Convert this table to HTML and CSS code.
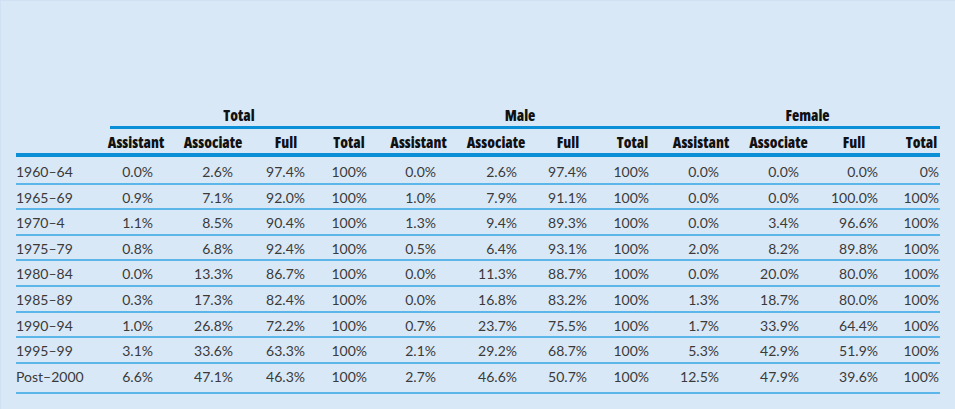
FILE: index.html
```html
<!DOCTYPE html>
<html lang="en">
<head>
<meta charset="utf-8">
<title>Rank distribution by cohort</title>
<link rel="stylesheet" href="styles.css">
</head>
<body>
<div class="page">
  <div class="table">
    <div class="grid groups">
      <div class="group g-total">Total</div>
      <div class="group g-male">Male</div>
      <div class="group g-female">Female</div>
    </div>
    <div class="grid subheads">
      <div class="lab"></div>
      <div class="sh">Assistant</div><div class="sh">Associate</div><div class="sh">Full</div><div class="sh">Total</div>
      <div class="sh">Assistant</div><div class="sh">Associate</div><div class="sh">Full</div><div class="sh">Total</div>
      <div class="sh">Assistant</div><div class="sh">Associate</div><div class="sh">Full</div><div class="sh sh-last">Total</div>
    </div>
    <div class="rows">
      <div class="grid row"><div class="lab">1960–64</div><div class="v c1">0.0%</div><div class="v c2">2.6%</div><div class="v c3">97.4%</div><div class="v c4">100%</div><div class="v c5">0.0%</div><div class="v c6">2.6%</div><div class="v c7">97.4%</div><div class="v c8">100%</div><div class="v c9">0.0%</div><div class="v c10">0.0%</div><div class="v c11">0.0%</div><div class="v c12">0%</div></div>
      <div class="grid row"><div class="lab">1965–69</div><div class="v c1">0.9%</div><div class="v c2">7.1%</div><div class="v c3">92.0%</div><div class="v c4">100%</div><div class="v c5">1.0%</div><div class="v c6">7.9%</div><div class="v c7">91.1%</div><div class="v c8">100%</div><div class="v c9">0.0%</div><div class="v c10">0.0%</div><div class="v c11">100.0%</div><div class="v c12">100%</div></div>
      <div class="grid row"><div class="lab">1970–4</div><div class="v c1">1.1%</div><div class="v c2">8.5%</div><div class="v c3">90.4%</div><div class="v c4">100%</div><div class="v c5">1.3%</div><div class="v c6">9.4%</div><div class="v c7">89.3%</div><div class="v c8">100%</div><div class="v c9">0.0%</div><div class="v c10">3.4%</div><div class="v c11">96.6%</div><div class="v c12">100%</div></div>
      <div class="grid row"><div class="lab">1975–79</div><div class="v c1">0.8%</div><div class="v c2">6.8%</div><div class="v c3">92.4%</div><div class="v c4">100%</div><div class="v c5">0.5%</div><div class="v c6">6.4%</div><div class="v c7">93.1%</div><div class="v c8">100%</div><div class="v c9">2.0%</div><div class="v c10">8.2%</div><div class="v c11">89.8%</div><div class="v c12">100%</div></div>
      <div class="grid row"><div class="lab">1980–84</div><div class="v c1">0.0%</div><div class="v c2">13.3%</div><div class="v c3">86.7%</div><div class="v c4">100%</div><div class="v c5">0.0%</div><div class="v c6">11.3%</div><div class="v c7">88.7%</div><div class="v c8">100%</div><div class="v c9">0.0%</div><div class="v c10">20.0%</div><div class="v c11">80.0%</div><div class="v c12">100%</div></div>
      <div class="grid row"><div class="lab">1985–89</div><div class="v c1">0.3%</div><div class="v c2">17.3%</div><div class="v c3">82.4%</div><div class="v c4">100%</div><div class="v c5">0.0%</div><div class="v c6">16.8%</div><div class="v c7">83.2%</div><div class="v c8">100%</div><div class="v c9">1.3%</div><div class="v c10">18.7%</div><div class="v c11">80.0%</div><div class="v c12">100%</div></div>
      <div class="grid row"><div class="lab">1990–94</div><div class="v c1">1.0%</div><div class="v c2">26.8%</div><div class="v c3">72.2%</div><div class="v c4">100%</div><div class="v c5">0.7%</div><div class="v c6">23.7%</div><div class="v c7">75.5%</div><div class="v c8">100%</div><div class="v c9">1.7%</div><div class="v c10">33.9%</div><div class="v c11">64.4%</div><div class="v c12">100%</div></div>
      <div class="grid row"><div class="lab">1995–99</div><div class="v c1">3.1%</div><div class="v c2">33.6%</div><div class="v c3">63.3%</div><div class="v c4">100%</div><div class="v c5">2.1%</div><div class="v c6">29.2%</div><div class="v c7">68.7%</div><div class="v c8">100%</div><div class="v c9">5.3%</div><div class="v c10">42.9%</div><div class="v c11">51.9%</div><div class="v c12">100%</div></div>
      <div class="grid row row-last"><div class="lab">Post–2000</div><div class="v c1">6.6%</div><div class="v c2">47.1%</div><div class="v c3">46.3%</div><div class="v c4">100%</div><div class="v c5">2.7%</div><div class="v c6">46.6%</div><div class="v c7">50.7%</div><div class="v c8">100%</div><div class="v c9">12.5%</div><div class="v c10">47.9%</div><div class="v c11">39.6%</div><div class="v c12">100%</div></div>
    </div>
  </div>
</div>
</body>
</html>
```

FILE: styles.css
```css
html, body {
  margin: 0;
  padding: 0;
  background: #d9e8f7;
}
.page {
  width: 955px;
  height: 409px;
  box-sizing: border-box;
  padding: 103px 15px 0 15px;
  background: #d9e8f7;
  border-top: 1px solid #d0e1f3;
  border-left: 1px solid #d0e1f3;
}
.table {
  width: 924px;
}
.grid {
  display: grid;
  grid-template-columns: 81px 78px 76px 70px 56px 83px 72px 72px 57px 80px 75px 76px 48px;
}
.group, .sh {
  font-family: "Open Sans", "DejaVu Sans Condensed", sans-serif;
  font-stretch: 75%;
  font-weight: 800;
  font-size: 15px;
  line-height: 22px;
  color: #111111;
  text-align: center;
}
.group {
  border-bottom: 3px solid #0b8fd6;
}
.g-total {
  grid-column: 2 / 6;
  margin-left: 13px;
  padding-right: 9px;
}
.g-male {
  grid-column: 6 / 10;
  padding-left: 2px;
}
.g-female {
  grid-column: 10 / 14;
  padding-left: 14px;
}
.subheads {
  border-bottom: 4px solid #0b8fd6;
  padding-top: 2px;
}
.sh-last {
  padding-left: 11px;
}
.rows {
  padding-top: 2px;
}
.row {
  padding-top: 2px;
  border-bottom: 2px solid #5db6ea;
  font-family: Lato, "Liberation Sans", sans-serif;
  font-size: 14px;
  line-height: 21.6px;
  color: #3a3a3a;
}
.row-last {
  padding-bottom: 5px;
}
.lab {
  text-align: left;
}
.v {
  text-align: right;
}
.c1 { padding-right: 22px; }
.c2 { padding-right: 18px; }
.c3 { padding-right: 16px; }
.c4 { padding-right: 10px; }
.c5 { padding-right: 24px; }
.c6 { padding-right: 15px; }
.c7 { padding-right: 17px; }
.c8 { padding-right: 12px; }
.c9 { padding-right: 22px; }
.c10 { padding-right: 17px; }
.c11 { padding-right: 14px; }
.c12 { padding-right: 1px; }
```
